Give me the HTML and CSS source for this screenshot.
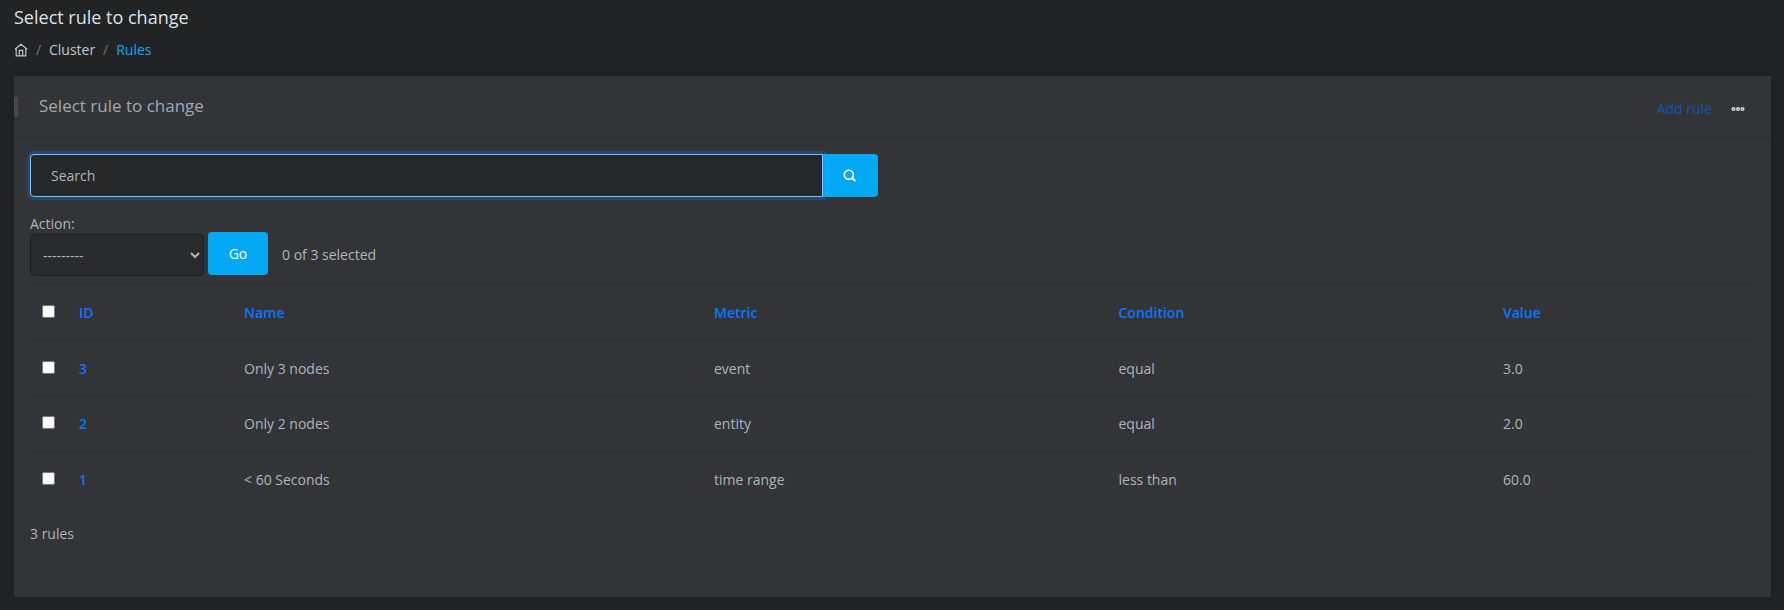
FILE: index.html
```
<!DOCTYPE html>
<html lang="en">
<head>
<meta charset="utf-8">
<title>Select rule to change</title>
<link rel="stylesheet" href="styles.css">
</head>
<body>
<header class="page-header">
  <h1 class="page-title">Select rule to change</h1>
  <nav class="breadcrumb">
    <a class="crumb" href="#" aria-label="Home"><svg class="home-icon" viewBox="0 0 14 14" width="14" height="14" fill="none" stroke="currentColor" stroke-width="1.200"><path d="M.9 6.300 7 1.200l6.100 5.100M2.200 5.500v7.300h9.600V5.500M5.300 12.500V7.400h3.400v5.100"/></svg></a>
    <span class="slash">/</span>
    <a class="crumb" href="#">Cluster</a>
    <span class="slash">/</span>
    <a class="crumb active" href="#">Rules</a>
  </nav>
</header>
<main class="card">
  <div class="card-header">
    <h2 class="card-title">Select rule to change</h2>
    <div class="card-actions">
      <a class="add" href="#">Add rule</a>
      <svg class="dots" viewBox="0 0 14 6" width="14" height="6" fill="none" stroke="currentColor" stroke-width="1.600"><circle cx="2.500" cy="3" r="1.300"/><circle cx="7" cy="3" r="1.300"/><circle cx="11.500" cy="3" r="1.300"/></svg>
    </div>
  </div>
  <div class="card-body">
    <form class="search">
      <input class="search-input" type="text" placeholder="Search">
      <button class="search-btn" type="button" aria-label="Search"><svg viewBox="0 0 13 13" width="13" height="13" fill="none" stroke="currentColor" stroke-width="1.600"><circle cx="5.800" cy="5.800" r="4.500"/><path d="m9 9 3.300 3" stroke-width="2"/></svg></button>
    </form>
    <div class="action-label">Action:</div>
    <div class="actions">
      <select class="action-select"><option>---------</option></select>
      <button class="go" type="button">Go</button>
      <span class="counter">0 of 3 selected</span>
    </div>
    <table class="rules">
      <colgroup><col class="c-check"><col class="c-id"><col class="c-name"><col class="c-metric"><col class="c-cond"><col></colgroup>
      <thead>
        <tr><th><input class="check" type="checkbox"></th><th>ID</th><th>Name</th><th>Metric</th><th>Condition</th><th>Value</th></tr>
      </thead>
      <tbody>
        <tr><td><input class="check" type="checkbox"></td><th>3</th><td>Only 3 nodes</td><td>event</td><td>equal</td><td>3.0</td></tr>
        <tr class="short"><td><input class="check" type="checkbox"></td><th>2</th><td>Only 2 nodes</td><td>entity</td><td>equal</td><td>2.0</td></tr>
        <tr><td><input class="check" type="checkbox"></td><th>1</th><td>&lt; 60 Seconds</td><td>time range</td><td>less than</td><td>60.0</td></tr>
      </tbody>
    </table>
    <div class="total">3 rules</div>
  </div>
</main>
</body>
</html>
```
FILE: styles.css
```
* { box-sizing: border-box; }
body {
  margin: 0;
  height: 610px;
  overflow: hidden;
  padding: 0 13px 0 14px;
  background: #222325;
  color: #adb5bd;
  font: 14px/21px "Open Sans", sans-serif;
}
a { text-decoration: none; }
.page-header { height: 76px; padding-top: 5px; }
.page-title { margin: 0; font-size: 18px; line-height: 25px; font-weight: 400; color: #dee2e6; }
.breadcrumb { display: flex; align-items: center; margin-top: 9px; }
.crumb { color: #bfc6cc; }
.crumb.active { color: #04a9f5; }
.home-icon { display: block; color: #bfc6cc; }
.slash { width: 21px; text-align: center; color: #6c757d; }
.card {
  height: 521px;
  background: #333437;
  box-shadow: 0 0 15px rgba(0, 0, 0, .16);
}
.card-header {
  display: flex;
  justify-content: space-between;
  height: 62px;
  border-bottom: 1px solid #2a2b2d;
}
.card-title {
  margin: 21px 0 0;
  height: 20px;
  padding-left: 21px;
  border-left: 4px solid #48494c;
  font-size: 17px;
  line-height: 17px;
  font-weight: 400;
  color: #9fa9b1;
}
.card-actions { display: flex; align-items: center; gap: 19px; padding: 4px 26px 0 0; }
.add { color: #0d57b5; }
.dots { color: #ced4da; }
.card-body { padding: 16px 16px 0; }
.search { display: flex; height: 43px; }
.search-input {
  width: 793px;
  padding: 0 20px;
  border: 1px solid #80bdff;
  border-radius: 4px 0 0 4px;
  outline: 0;
  background: #262729;
  box-shadow: 0 0 0 3px rgba(0, 123, 255, .3);
  color: #adb5bd;
  font: inherit;
}
.search-input::placeholder { color: #adb5bd; opacity: 1; }
.search-btn {
  display: flex;
  align-items: center;
  justify-content: center;
  width: 55px;
  padding: 0 2px 0 0;
  border: 0;
  border-radius: 0 4px 4px 0;
  background: #04a9f5;
  color: #fff;
}
.action-label { margin-top: 16px; height: 19px; }
.actions { display: flex; align-items: flex-start; height: 52px; }
.action-select {
  width: 174px;
  height: 42px;
  margin-top: 2px;
  padding: 0 8px;
  border: 1px solid #1c1d1e;
  border-radius: 4px;
  background-color: #292a2c;
  color: #adb5bd;
  font: inherit;
}
.go {
  width: 60px;
  height: 43px;
  margin-left: 4px;
  padding: 0;
  border: 0;
  border-radius: 4px;
  background: #04a9f5;
  color: #fff;
  font: 500 14px/21px "Open Sans", sans-serif;
}
.counter { margin: 12px 0 0 14px; }
.rules { width: 1725px; table-layout: fixed; border-collapse: separate; border-spacing: 0; }
.c-check { width: 37px; }
.c-id { width: 165px; }
.c-name { width: 470px; }
.c-metric { width: 404.5px; }
.c-cond { width: 384.5px; }
.rules th, .rules td {
  height: 56px;
  padding: 0 12px;
  border-top: 1px solid #2d2e31;
  text-align: left;
  vertical-align: middle;
}
.rules .short th, .rules .short td { height: 55px; padding-bottom: 1px; }
.rules th { font-weight: 600; color: #0d75ff; }
.check { display: block; width: 13px; height: 13px; margin: 0 0 3px; }
.total { margin-top: 16px; }
```
